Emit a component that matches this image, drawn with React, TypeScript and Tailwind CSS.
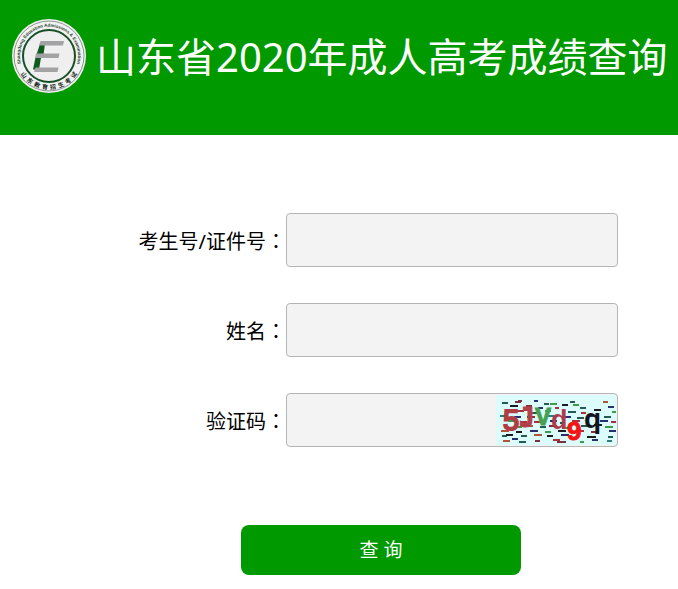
import { useState } from 'react';

const fieldClass =
  'block h-[54px] w-full rounded border border-[#b5b5b5] bg-[#f3f3f3] px-3 text-xl text-black outline-none focus:border-[#009900]';

const noiseColors = ['#245b52', '#a8323c', '#27306e', '#3f9a4c', '#1c1c24', '#7c3040', '#2d7d78', '#b0553c'];

// Short dashes scattered behind the characters, as [x, y, width, color index]
const noise: [number, number, number, number][] = [
  [6, 7, 6, 0], [19, 6, 6, 5], [22, 5, 4, 5], [38, 5, 4, 2], [48, 8, 5, 0], [74, 6, 5, 0], [54, 8, 7, 3], [66, 9, 6, 4],
  [77, 9, 6, 3], [107, 6, 5, 7], [14, 10, 8, 4], [30, 10, 6, 5], [42, 12, 5, 2], [59, 12, 4, 1], [84, 12, 6, 0],
  [112, 11, 6, 2], [9, 14, 5, 7], [21, 15, 7, 1], [35, 17, 6, 0], [49, 15, 6, 3], [72, 16, 8, 0], [85, 17, 5, 1],
  [98, 14, 7, 4], [116, 16, 4, 3], [4, 20, 6, 6], [18, 21, 7, 2], [31, 21, 8, 5], [52, 20, 6, 6], [67, 21, 8, 2],
  [81, 22, 7, 0], [94, 20, 6, 2], [108, 21, 7, 0], [12, 25, 7, 3], [25, 26, 6, 1], [38, 26, 7, 1], [54, 25, 7, 2],
  [64, 27, 5, 0], [76, 25, 8, 1], [104, 25, 8, 2], [115, 26, 5, 1], [18, 31, 8, 3], [30, 30, 7, 7], [44, 31, 6, 0],
  [53, 30, 8, 5], [66, 32, 7, 3], [85, 30, 8, 0], [98, 29, 8, 4], [109, 31, 8, 3], [5, 35, 8, 7], [20, 36, 6, 4],
  [34, 35, 8, 2], [49, 36, 6, 3], [62, 35, 8, 4], [83, 35, 5, 1], [95, 36, 7, 5], [113, 35, 7, 2], [6, 40, 5, 0],
  [10, 39, 7, 4], [25, 40, 6, 0], [38, 39, 8, 7], [51, 40, 6, 4], [65, 39, 8, 2], [91, 41, 9, 4], [96, 44, 6, 2],
  [112, 41, 5, 0], [7, 45, 7, 7], [16, 43, 6, 2], [23, 46, 7, 0], [39, 45, 5, 5], [57, 44, 7, 1], [61, 46, 9, 5],
  [84, 46, 4, 3], [111, 45, 5, 6],
];

function Emblem() {
  return (
    <svg viewBox="0 0 148 148" className="size-[74px] shrink-0" role="img" aria-label="山东教育招生考试">
      <defs>
        <path id="emblem-top" d="M26 106A58 58 0 1 1 122 106" />
        <path id="emblem-bottom" d="M7 74A67 67 0 0 0 141 74" />
      </defs>
      <circle cx="74" cy="74" r="74" fill="#f1f2f1" />
      <circle cx="74" cy="74" r="70" fill="none" stroke="#6b766d" strokeWidth="1.5" />
      <circle cx="74" cy="74" r="52" fill="#efefef" stroke="#174f27" strokeWidth="4" />
      <text fill="#28432e" fontSize="9" fontWeight="700" fontFamily="Liberation Sans, sans-serif">
        <textPath href="#emblem-top" startOffset="50%" textAnchor="middle">
          Shangdong Education Admissions &amp; Examination
        </textPath>
      </text>
      <text fill="#18251b" fontSize="12" fontWeight="700" fontFamily="'Noto Sans CJK SC', sans-serif">
        <textPath href="#emblem-bottom" startOffset="50%" textAnchor="middle">
          {'山东教育招生考试'.split('').join('\u00a0\u00a0')}
        </textPath>
      </text>
      <path d="M56 50h10l-3 21H49z" fill="#0f5a1c" />
      <path d="M47 77h11l-4 24H42z" fill="#0f5a1c" />
      <path d="M57 44h47l-2 9H54z" fill="#a3a3a5" />
      <path d="M48 69h47l-2 9H46z" fill="#a3a3a5" />
      <path d="M47 97h46l-2 9H44z" fill="#a3a3a5" />
    </svg>
  );
}

function Captcha() {
  return (
    <svg viewBox="0 0 120 50" className="h-[50px] w-[120px]" role="img" aria-label="验证码">
      <rect width="120" height="50" fill="#dcfcfc" />
      {noise.map(([x, y, width, color], i) => (
        <rect key={i} x={x} y={y} width={width} height="2" fill={noiseColors[color]} />
      ))}
      <g fontFamily="'Liberation Sans', sans-serif" fontWeight="700">
        <text x="7" y="35" fontSize="29" fontWeight="400" fill="#b13c43" stroke="#b13c43" strokeWidth="2">5</text>
        <text x="23" y="32" fontSize="26" fontFamily="'DejaVu Sans Mono', monospace" fill="#b2404a" stroke="#b2404a">J</text>
        <text x="39" y="30" fontSize="24" fill="#45a052" stroke="#45a052">V</text>
        <text x="55" y="34" fontSize="27" fill="#ad3b4e">d</text>
        <text x="71" y="45" fontSize="26" fill="#f51414" stroke="#f51414">9</text>
        <text x="88" y="33" fontSize="28" fill="#15151d">q</text>
      </g>
    </svg>
  );
}

function FieldLabel({ htmlFor, text }: { htmlFor: string; text: string }) {
  return (
    <label htmlFor={htmlFor} className="pt-0.5 text-right text-xl whitespace-nowrap">
      {text}
      {/* Traditional glyph keeps the colon centered in its cell */}
      <span lang="zh-TW" className="font-['Noto_Sans_CJK_TC',sans-serif]">：</span>
    </label>
  );
}

export default function App() {
  const [number, setNumber] = useState('');
  const [name, setName] = useState('');
  const [code, setCode] = useState('');

  return (
    <div lang="zh-CN" className="bg-white font-['Noto_Sans','Noto_Sans_CJK_SC',sans-serif] text-black">
      <header className="flex h-[135px] items-start gap-2.5 bg-[#009900] px-3 pt-[19px]">
        <Emblem />
        <h1 className="text-[40px] leading-[76px] whitespace-nowrap text-white">山东省2020年成人高考成绩查询</h1>
      </header>

      <form className="pt-[78px] pb-3.5" onSubmit={(e) => e.preventDefault()}>
        <div className="grid grid-cols-[286px_1fr] items-center gap-y-9 pr-[60px]">
          <FieldLabel htmlFor="number" text="考生号/证件号" />
          <input id="number" className={fieldClass} value={number} onChange={(e) => setNumber(e.target.value)} />

          <FieldLabel htmlFor="name" text="姓名" />
          <input id="name" className={fieldClass} value={name} onChange={(e) => setName(e.target.value)} />

          <FieldLabel htmlFor="code" text="验证码" />
          <div className="relative">
            <input id="code" className={fieldClass} value={code} onChange={(e) => setCode(e.target.value)} />
            <button type="button" className="absolute top-0.5 right-0.5 cursor-pointer" aria-label="换一张">
              <Captcha />
            </button>
          </div>
        </div>

        <div className="mt-[78px] flex justify-center pl-[84px]">
          <button type="submit" className="h-[50px] w-[280px] cursor-pointer rounded-lg bg-[#009900] text-[19px] text-white">
            查 询
          </button>
        </div>
      </form>
    </div>
  );
}
